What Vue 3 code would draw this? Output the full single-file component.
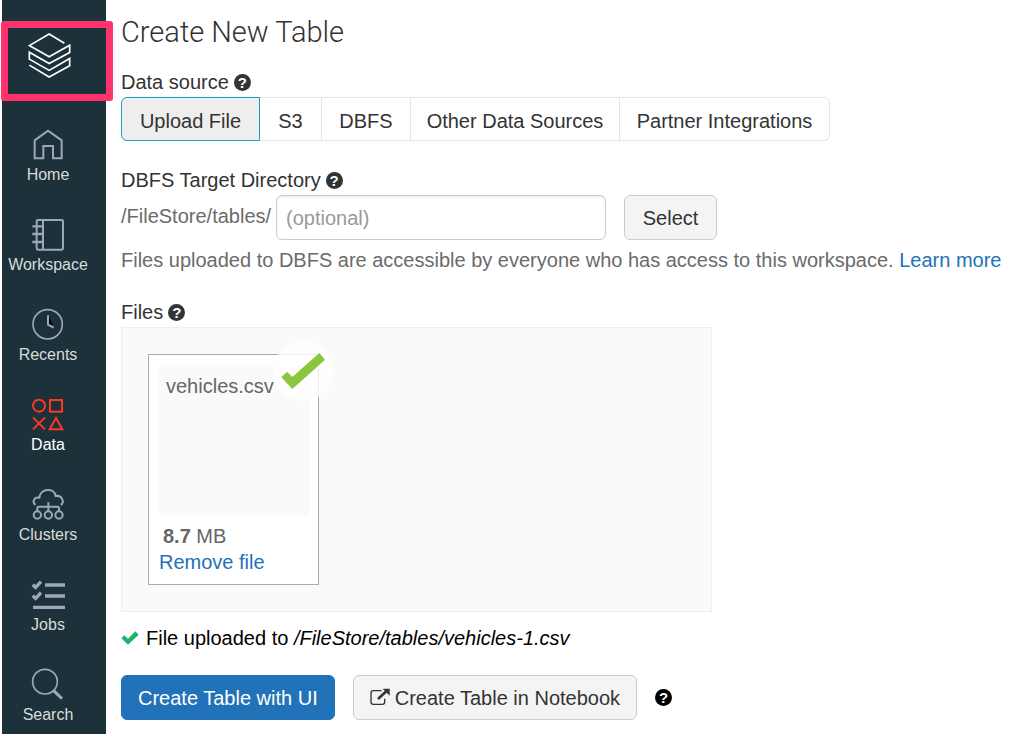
<script setup>
import { ref } from 'vue'

const navItems = [
  { id: 'home', label: 'Home' },
  { id: 'workspace', label: 'Workspace' },
  { id: 'recents', label: 'Recents' },
  { id: 'data', label: 'Data' },
  { id: 'clusters', label: 'Clusters' },
  { id: 'jobs', label: 'Jobs' },
  { id: 'search', label: 'Search' },
]
const sources = ['Upload File', 'S3', 'DBFS', 'Other Data Sources', 'Partner Integrations']
const activeSource = ref('Upload File')
const directory = ref('')
</script>

<template>
  <div class="app">
    <aside class="sidebar">
      <a class="brand" href="#" aria-label="Databricks">
        <svg class="logo" viewBox="86 98 128 136" fill="none" stroke="#fff" stroke-width="5">
          <path d="M195 129 149 101 89 136 149 170 211 135V157L149 190 89 156V177L149 211 211 175V197L149 231 89 195" />
        </svg>
      </a>
      <nav class="nav">
        <a v-for="item in navItems" :key="item.id" href="#" class="nav-item" :class="{ active: item.id === 'data' }">
          <svg class="nav-icon" viewBox="0 0 96 96" fill="none" stroke="currentColor" stroke-width="6">
            <path v-if="item.id === 'home'" d="M8 88V34L48 5 89 34V88H63V51H34V88Z" />
            <template v-else-if="item.id === 'workspace'">
              <rect x="14" y="3" width="79" height="89" rx="4" />
              <path d="M33 3V92" />
              <path d="M1 22H33M1 45H33M1 69H33" stroke-width="7" />
            </template>
            <template v-else-if="item.id === 'recents'">
              <path d="M50 20 63 49 50 46Z" fill="#000" stroke="none" />
              <circle cx="47" cy="46" r="44" stroke-width="5" />
              <path d="M48 19V47L65 56" />
            </template>
            <template v-else-if="item.id === 'data'">
              <circle cx="21" cy="20" r="18" />
              <rect x="54" y="3" width="36" height="35" />
              <path d="M3 55 39 91M39 55 3 91M72 57 91 91H53Z" />
            </template>
            <template v-else-if="item.id === 'clusters'">
              <path d="M10 48C0 40 5 23 22 26 24 -2 66 -6 71 21 90 18 98 38 87 48" />
              <path d="M16 67V57Q16 53 20 53H77Q81 53 81 57V67M49 40V67" />
              <circle cx="16" cy="78" r="11" /><circle cx="49" cy="78" r="11" /><circle cx="81" cy="78" r="11" />
            </template>
            <template v-else-if="item.id === 'jobs'">
              <path d="M39 18H99M39 51H99M3 85H99" stroke-width="10" />
              <path d="M2 17 11 25 27 8M2 50 11 58 27 41" stroke-width="10" />
            </template>
            <template v-else>
              <circle cx="39" cy="38" r="37" stroke-width="5" />
              <path d="M64 64 90 89" stroke-width="9" />
            </template>
          </svg>
          <span>{{ item.label }}</span>
        </a>
      </nav>
    </aside>

    <main class="main">
      <h1>Create New Table</h1>

      <section>
        <div class="label">Data source <button class="help" type="button" aria-label="About data sources">?</button></div>
        <div class="tabs">
          <button
            v-for="source in sources"
            :key="source"
            type="button"
            class="tab"
            :class="{ selected: source === activeSource }"
            @click="activeSource = source"
          >{{ source }}</button>
        </div>
      </section>

      <section>
        <div class="label">
          <label for="directory">DBFS Target Directory</label>
          <button class="help" type="button" aria-label="About the target directory">?</button>
        </div>
        <div class="directory">
          <span class="prefix">/FileStore/tables/</span>
          <input id="directory" v-model="directory" type="text" placeholder="(optional)" />
          <button class="btn" type="button">Select</button>
        </div>
        <p class="note">Files uploaded to DBFS are accessible by everyone who has access to this workspace. <a href="#">Learn more</a></p>
      </section>

      <section>
        <div class="label">Files <button class="help" type="button" aria-label="About files">?</button></div>
        <div class="dropzone">
          <div class="card">
            <div class="preview">vehicles.csv</div>
            <div class="size"><strong>8.7</strong> MB</div>
            <a href="#">Remove file</a>
            <span class="badge">
              <svg viewBox="0 0 180 180"><path d="M25 109 42 92 58 108 139 36 156 56 58 144Z" fill="#8cc63f" /></svg>
            </span>
          </div>
        </div>
        <p class="status">
          <svg class="tick" viewBox="0 0 54 42"><path d="M1 22 10 13 21 23 43 1 53 11 21 41Z" fill="#1db36b" /></svg>
          <span>File uploaded to <em>/FileStore/tables/vehicles-1.csv</em></span>
        </p>
      </section>

      <div class="actions">
        <button class="btn primary" type="button">Create Table with UI</button>
        <button class="btn" type="button">
          <svg class="external" viewBox="0 0 60 54" fill="none" stroke="#333" stroke-width="4">
            <path d="M35 8H10Q3 8 3 15V42Q3 49 10 49H37Q44 49 44 42V32" />
            <path d="M24 33 49 10" stroke-width="8" />
            <path d="M38 2H59V23Z" fill="#333" stroke="none" />
          </svg>Create Table in Notebook
        </button>
        <button class="help dark" type="button" aria-label="About creating tables">?</button>
      </div>
    </main>
  </div>
</template>

<style>
body {
  background: #fff;
}
</style>

<style scoped>
.app {
  display: flex;
  min-height: 100vh;
  padding-left: 2px;
  box-sizing: border-box;
  font: 20px/26px "Liberation Sans", Arial, sans-serif;
  color: #333;
}
.app *,
.brand::after {
  box-sizing: border-box;
}
button,
input {
  font: inherit;
  color: inherit;
}
a {
  color: #2272b9;
  text-decoration: none;
}
.sidebar {
  position: relative;
  flex: 0 0 104px;
  padding-top: 33px;
  background: #1c3139;
}
.brand {
  display: block;
  height: 96px;
  padding-left: 26px;
}
.brand::after {
  content: "";
  position: absolute;
  top: 21px;
  left: -1px;
  width: 112px;
  height: 80px;
  border: 7px solid #ff326c;
  border-radius: 3px;
}
.logo {
  display: block;
  width: 43px;
  height: 45px;
}
.nav {
  display: flex;
  flex-direction: column;
  gap: 33px;
  padding-right: 12px;
}
.nav-item {
  display: flex;
  flex-direction: column;
  align-items: center;
  gap: 3px;
  font-size: 16px;
  line-height: 22px;
  color: #d9dcdc;
}
.nav-item.active {
  color: #fff;
}
.nav-icon {
  width: 32px;
  height: 32px;
  color: #9ba8ba;
  overflow: visible;
}
.nav-item.active .nav-icon {
  color: #ff3621;
}
.main {
  flex: 1;
  min-width: 0;
  padding: 12px 15px 14px;
}
h1 {
  margin: 0 0 17px;
  font: 300 29px/40px Roboto, "Liberation Sans", sans-serif;
}
section {
  margin-bottom: 24px;
}
.label {
  display: flex;
  align-items: center;
  gap: 5px;
  margin-bottom: 2px;
}
.help {
  width: 17px;
  height: 17px;
  padding: 0;
  border: 0;
  border-radius: 50%;
  background: #333;
  color: #fff;
  font-size: 15px;
  font-weight: bold;
  line-height: 17px;
  text-align: center;
}
.help.dark {
  background: #000;
}
.tabs {
  display: grid;
  grid-template-columns: 139px 62px 89px 209px 210px;
  margin-bottom: 26px;
}
.tab {
  height: 44px;
  padding: 3px 0 0;
  border: 1px solid #e5e5e5;
  border-left: 0;
  background: #fff;
  white-space: nowrap;
}
.tab:first-child {
  border-left: 1px solid #e5e5e5;
  border-radius: 6px 0 0 6px;
}
.tab:last-child {
  border-radius: 0 6px 6px 0;
}
.tab.selected {
  border: 1px solid #1b9fc6;
  background: #eee;
}
.directory {
  display: flex;
  align-items: center;
}
.prefix {
  padding-bottom: 3px;
  color: #6b6b6b;
  margin-right: 5px;
}
.directory input {
  width: 330px;
  height: 45px;
  margin-right: 18px;
  padding: 2px 9px 0;
  border: 1px solid #ccc;
  border-radius: 6px;
  background: #fff;
  box-shadow: inset 0 1px 2px #e8e8e8;
}
.directory input::placeholder {
  color: #999;
}
.btn {
  height: 45px;
  min-width: 93px;
  padding: 0 16px;
  border: 1px solid #ccc;
  border-radius: 6px;
  background: #f4f4f4;
  white-space: nowrap;
}
.btn.primary {
  border-color: #2272b9;
  background: #2272b9;
  color: #fff;
}
.note {
  margin: 7px 0 26px;
  color: #6b6b6b;
}
.dropzone {
  max-width: 591px;
  padding: 26px;
  border: 1px solid #eee;
  background: #fafafa;
}
.card {
  position: relative;
  width: 171px;
  padding: 10px 9px 9px 10px;
  border: 1px solid #aaa;
  background: #fff;
}
.preview {
  height: 150px;
  margin-bottom: 8px;
  padding: 8px 7px;
  background: #fafafa;
  color: #666;
}
.size {
  padding-left: 4px;
  color: #666;
}
.badge {
  position: absolute;
  top: -14px;
  right: -15px;
  width: 60px;
  height: 60px;
  border-radius: 50%;
  background: rgba(255, 255, 255, 0.8);
}
.badge svg {
  display: block;
}
.status {
  display: flex;
  align-items: center;
  gap: 7px;
  margin: 13px 0 0;
  color: #000;
}
.tick {
  width: 18px;
  height: 14px;
}
.actions {
  display: flex;
  align-items: center;
  gap: 18px;
}
.external {
  width: 20px;
  height: 18px;
  margin-right: 5px;
  vertical-align: -1px;
}
</style>
